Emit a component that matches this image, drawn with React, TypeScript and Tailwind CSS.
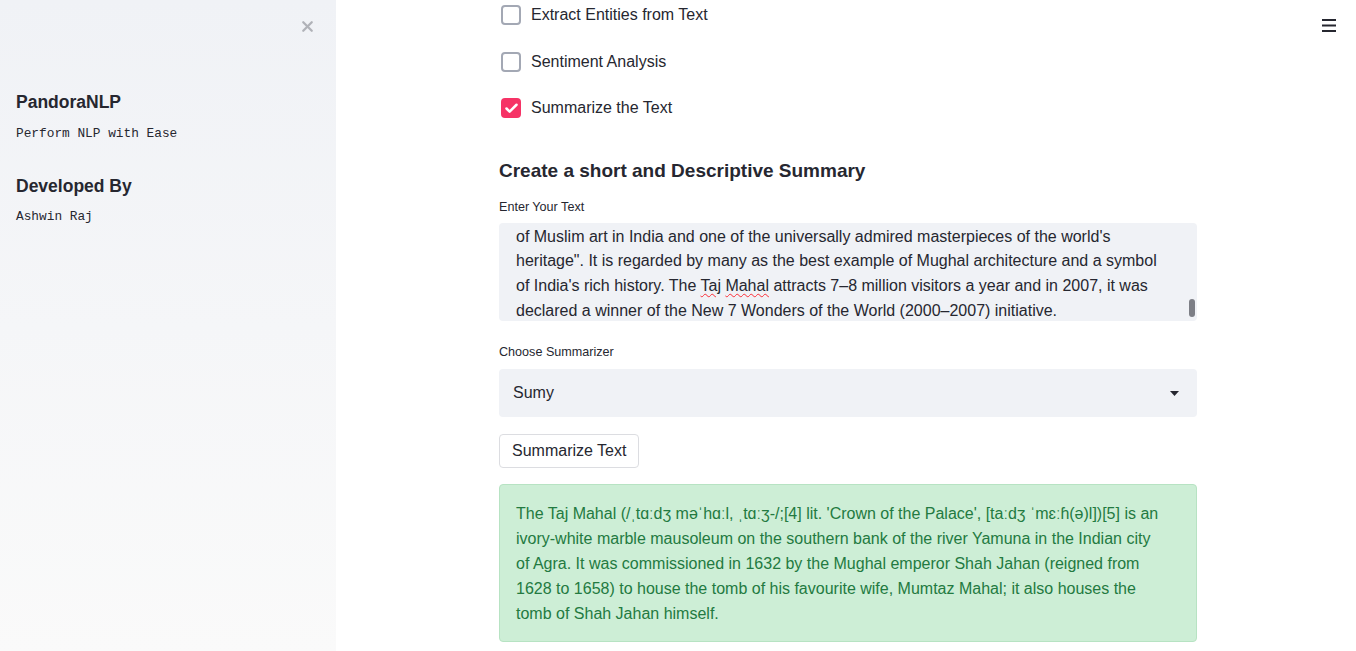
import { Check, X } from "lucide-react";

const sans = "font-['Liberation_Sans',Arial,sans-serif]";
const mono = "font-['Liberation_Mono','Courier_New',monospace]";

function CheckRow({ label, checked = false, className = "" }: { label: string; checked?: boolean; className?: string }) {
  return (
    <div className={`flex items-center h-[24px] ${className}`}>
      {checked ? (
        <span className="w-[20px] h-[20px] ml-[2px] rounded-[4px] bg-[#f63366] flex items-center justify-center">
          <Check size={15} strokeWidth={4} className="text-white" />
        </span>
      ) : (
        <span className="w-[20px] h-[20px] ml-[2px] rounded-[4px] border-2 border-[#a3a8b4] bg-white" />
      )}
      <span className="ml-[10px] text-[16px] text-[#262730]">{label}</span>
    </div>
  );
}

function Sidebar() {
  return (
    <aside className="w-[336px] shrink-0 h-[651px] bg-gradient-to-b from-[#f0f2f6] to-[#fafafa] relative">
      <X size={17} strokeWidth={3.2} className="absolute left-[299px] top-[18px] text-[#b0b2b8]" />
      <div className="pt-[90px] px-[16px] text-[#262730]">
        <h2 className="text-[17.5px] leading-[24px] font-bold">PandoraNLP</h2>
        <p className={`${mono} text-[12.8px] leading-[18px] mt-[11px]`}>Perform NLP with Ease</p>
        <h2 className="text-[17.5px] leading-[24px] font-bold mt-[31px]">Developed By</h2>
        <p className={`${mono} text-[12.8px] leading-[18px] mt-[10px]`}>Ashwin Raj</p>
      </div>
    </aside>
  );
}

const textLines = [
  "of Muslim art in India and one of the universally admired masterpieces of the world's",
  "heritage\". It is regarded by many as the best example of Mughal architecture and a symbol",
];

const summaryLines = [
  "The Taj Mahal (/ˌtɑːdʒ məˈhɑːl, ˌtɑːʒ-/;[4] lit. 'Crown of the Palace', [taːdʒ ˈmɛːɦ(ə)l])[5] is an",
  "ivory-white marble mausoleum on the southern bank of the river Yamuna in the Indian city",
  "of Agra. It was commissioned in 1632 by the Mughal emperor Shah Jahan (reigned from",
  "1628 to 1658) to house the tomb of his favourite wife, Mumtaz Mahal; it also houses the",
  "tomb of Shah Jahan himself.",
];

export default function App() {
  return (
    <div className={`${sans} flex w-[1356px] h-[651px] overflow-hidden bg-white text-[#262730]`}>
      <Sidebar />
      <main className="flex-1 relative pl-[163px]">
        <svg className="absolute right-[20px] top-[19px]" width="14" height="13" viewBox="0 0 14 13">
          <rect x="0" y="0" width="14" height="2" fill="#262730" />
          <rect x="0" y="5.5" width="14" height="2" fill="#262730" />
          <rect x="0" y="11" width="14" height="2" fill="#262730" />
        </svg>
        <div className="w-[698px] flex flex-col">
          <CheckRow label="Extract Entities from Text" className="mt-[3px]" />
          <CheckRow label="Sentiment Analysis" className="mt-[23px]" />
          <CheckRow label="Summarize the Text" checked className="mt-[22px]" />

          <h3 className="mt-[37px] text-[19px] leading-[28px] font-bold">Create a short and Descriptive Summary</h3>

          <label className="mt-[14px] text-[12.6px] leading-[16px]">Enter Your Text</label>
          <div className="mt-[8px] h-[98px] rounded-[4px] bg-[#f0f2f6] relative overflow-hidden pl-[17px] pt-[1.5px] text-[16px] leading-[24.7px]">
            {textLines.map((l) => (
              <div key={l} className="whitespace-nowrap">{l}</div>
            ))}
            <div className="whitespace-nowrap">
              of India's rich history. The{" "}
              <span className="underline decoration-wavy decoration-red-500 decoration-1 underline-offset-2">Taj</span>{" "}
              <span className="underline decoration-wavy decoration-red-500 decoration-1 underline-offset-2">Mahal</span>{" "}
              attracts 7–8 million visitors a year and in 2007, it was
            </div>
            <div className="whitespace-nowrap">declared a winner of the New 7 Wonders of the World (2000–2007) initiative.</div>
            <span className="absolute left-[690px] top-[76px] w-[6px] h-[18px] rounded-[3px] bg-[#7d7f86]" />
          </div>

          <label className="mt-[23px] text-[12.6px] leading-[16px]">Choose Summarizer</label>
          <div className="mt-[9px] h-[48px] rounded-[4px] bg-[#f0f2f6] flex items-center justify-between pl-[14px] pr-[18px]">
            <span className="text-[16px]">Sumy</span>
            <svg width="9" height="5" viewBox="0 0 9 5">
              <path d="M0 0 L9 0 L4.5 5 Z" fill="#262730" />
            </svg>
          </div>

          <button className="mt-[17px] self-start h-[34px] px-[12px] rounded-[4px] border border-[#dcdde1] bg-white text-[16px] text-[#262730]">
            Summarize Text
          </button>

          <div className="mt-[16px] h-[158px] rounded-[4px] border border-[#b7e3c3] bg-[#cdeed6] pl-[16px] pt-[16px] text-[16px] leading-[25px] text-[#237a41]">
            {summaryLines.map((l) => (
              <div key={l} className="whitespace-nowrap">{l}</div>
            ))}
          </div>
        </div>
      </main>
    </div>
  );
}
